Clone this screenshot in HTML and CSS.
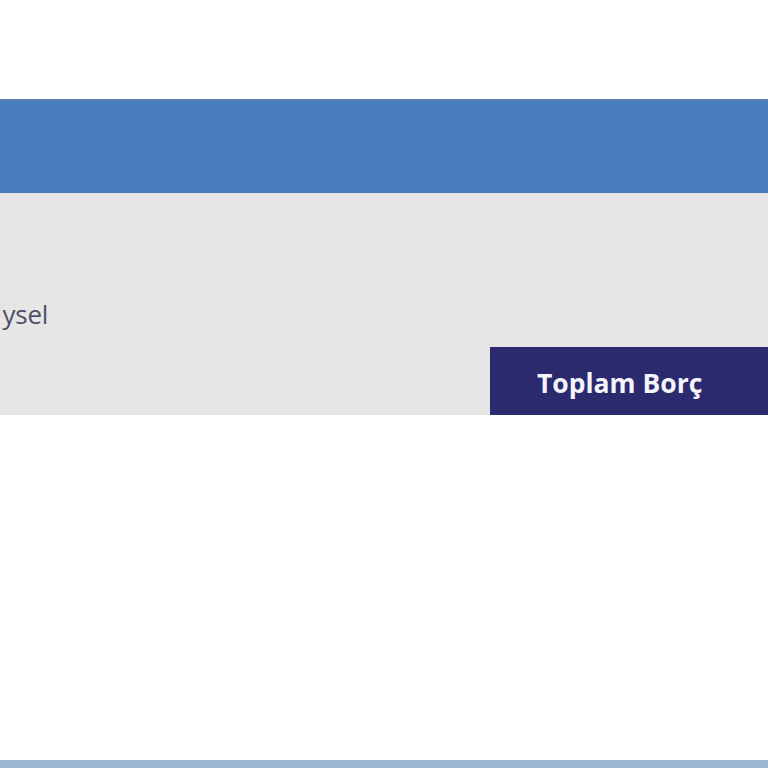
FILE: index.html
```html
<!DOCTYPE html>
<html lang="tr">
<head>
<meta charset="utf-8">
<link rel="stylesheet" href="styles.css">
</head>
<body>
<div class="page">
  <div class="top"></div>
  <div class="bar"></div>
  <div class="panel">
    <div class="label-row">
      <div class="label-clip"><span class="label">ysel</span></div>
    </div>
    <div class="btn-row">
      <div class="btn">Toplam Borç</div>
    </div>
  </div>
  <div class="content"></div>
  <div class="footer"></div>
</div>
</body>
</html>
```
FILE: styles.css
```css
html, body {
  margin: 0;
  padding: 0;
  background: #ffffff;
}
.page {
  width: 768px;
  height: 768px;
  display: flex;
  flex-direction: column;
  overflow: hidden;
  font-family: "Open Sans", "Liberation Sans", sans-serif;
}
.top {
  height: 99px;
  background: #ffffff;
}
.bar {
  height: 90px;
  background: #487dc0;
  border-top: 2px solid #5a7ea8;
  border-bottom: 2px solid #4a78b4;
}
.panel {
  height: 222px;
  background: #e6e6e6;
  display: flex;
  flex-direction: column;
}
.label-row {
  height: 154px;
  display: flex;
  align-items: flex-start;
  padding-top: 104px;
  box-sizing: border-box;
}
.label-clip {
  width: 48px;
  display: flex;
  justify-content: flex-end;
}
.label {
  font-size: 26px;
  line-height: 34px;
  letter-spacing: -0.3px;
  color: #4e5168;
  white-space: nowrap;
}
.btn-row {
  display: flex;
  justify-content: flex-end;
}
.btn {
  width: 231px;
  height: 68px;
  background: #2b2a6f;
  color: #f4f4fa;
  font-weight: 700;
  font-size: 26.5px;
  line-height: 72px;
  padding-left: 47px;
}
.content {
  flex: 1;
  background: #ffffff;
}
.footer {
  height: 8px;
  background: #9bb6d3;
}
```
